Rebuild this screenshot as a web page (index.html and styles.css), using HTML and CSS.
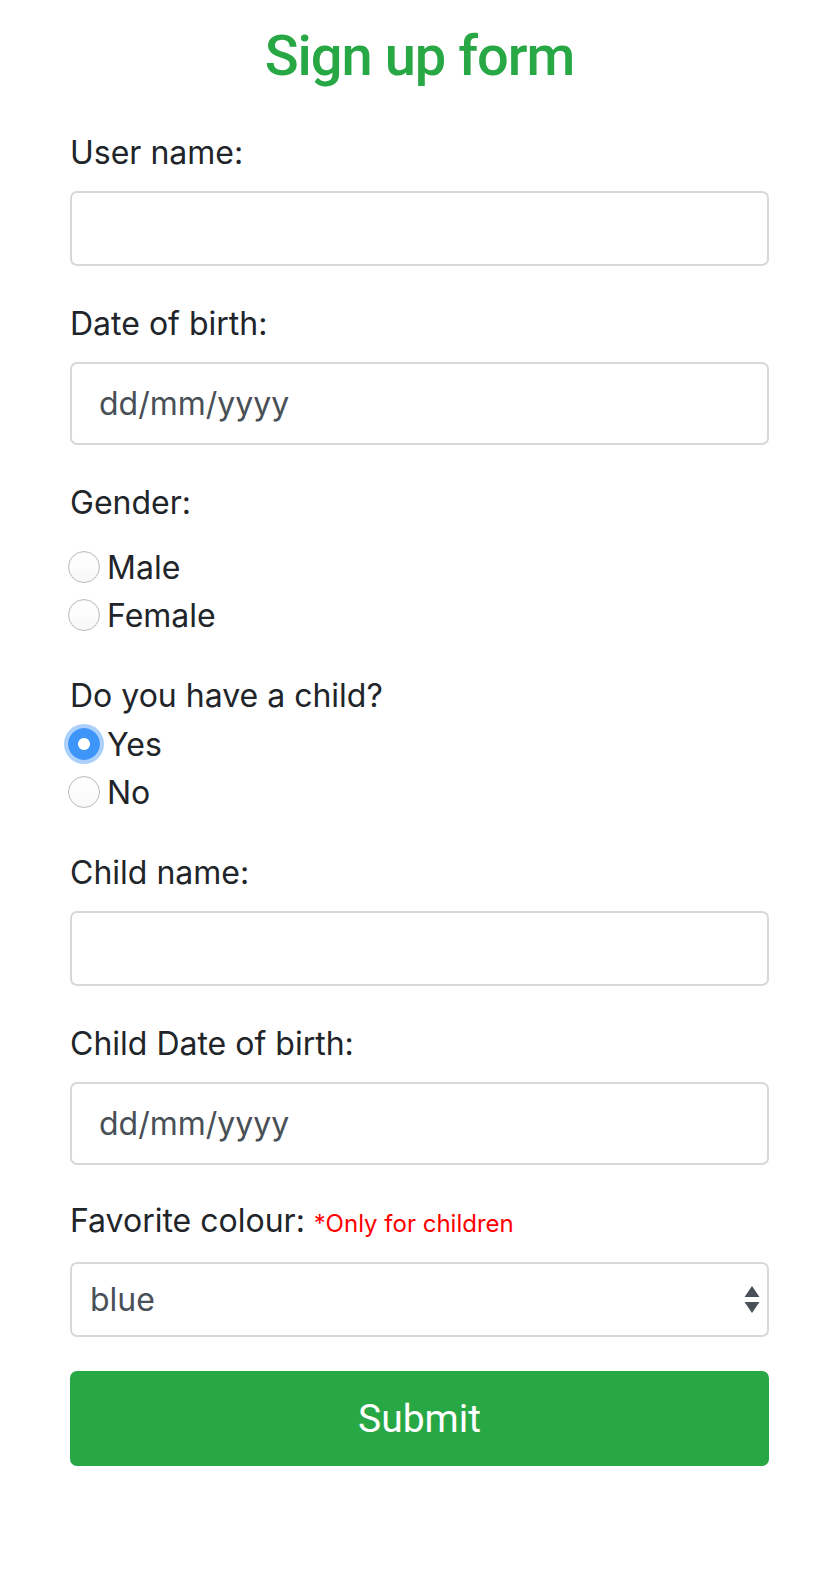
FILE: index.html
```html
<!DOCTYPE html>
<html lang="en">
<head>
<meta charset="utf-8">
<title>Sign up form</title>
<link rel="stylesheet" href="styles.css">
</head>
<body>
<div class="page">
  <h1 class="title">Sign up form</h1>
  <form class="form">
    <div class="group">
      <label class="label">User name:</label>
      <div class="field"></div>
    </div>
    <div class="group">
      <label class="label">Date of birth:</label>
      <div class="field field-date"><span>dd/mm/yyyy</span></div>
    </div>
    <div class="group group-radio">
      <label class="label label-gap">Gender:</label>
      <div class="radio-row"><span class="radio"></span><span>Male</span></div>
      <div class="radio-row"><span class="radio"></span><span>Female</span></div>
    </div>
    <div class="group group-radio">
      <label class="label label-tight">Do you have a child?</label>
      <div class="radio-row"><span class="radio radio-on"></span><span>Yes</span></div>
      <div class="radio-row"><span class="radio"></span><span>No</span></div>
    </div>
    <div class="group">
      <label class="label">Child name:</label>
      <div class="field"></div>
    </div>
    <div class="group group-short">
      <label class="label">Child Date of birth:</label>
      <div class="field field-date"><span>dd/mm/yyyy</span></div>
    </div>
    <div class="group">
      <label class="label">Favorite colour: <span class="note">*Only for children</span></label>
      <div class="field field-select">
        <span>blue</span>
        <svg class="arrows" width="16" height="28" viewBox="0 0 16 28"><path d="M8 0 L15.5 11 L0.5 11 Z" fill="#495057"/><path d="M0.5 16 L15.5 16 L8 27 Z" fill="#495057"/></svg>
      </div>
    </div>
    <div class="submit">Submit</div>
  </form>
</div>
</body>
</html>
```
FILE: styles.css
```css
html, body {
  margin: 0;
  padding: 0;
  background: #ffffff;
}

body {
  font-family: "Inter", "Noto Sans", sans-serif;
  font-size: 32px;
  color: #212529;
}

.page {
  padding: 23px 67px 40px 70px;
}

.title {
  margin: 0 0 39px;
  font-family: "Roboto", "Liberation Sans", sans-serif;
  font-weight: 500;
  font-size: 56px;
  line-height: 67px;
  letter-spacing: -1px;
  color: #28a745;
  text-align: center;
}

.form {
  display: flex;
  flex-direction: column;
}

.group {
  margin-bottom: 34px;
}

.group-radio {
  margin-bottom: 33px;
}

.group-short {
  margin-bottom: 32px;
}

.label {
  display: block;
  line-height: 48px;
  margin-bottom: 14px;
}

.label-gap {
  margin-bottom: 16px;
}

.label-tight {
  margin-bottom: 0;
}

.note {
  font-size: 24px;
  color: #ff0000;
  margin-left: 0;
}

.field {
  box-sizing: border-box;
  height: 75px;
  border: 2px solid #d8d8d8;
  border-radius: 7px;
  background: #ffffff;
  display: flex;
  align-items: center;
  color: #495057;
}

.field-date {
  height: 83px;
  padding-left: 27px;
}

.field-select {
  height: 75px;
  padding-left: 18px;
  padding-right: 7px;
  justify-content: space-between;
}

.arrows {
  display: block;
}

.radio-row {
  display: flex;
  align-items: center;
  height: 48px;
  gap: 7px;
  margin-left: -2px;
}

.radio {
  box-sizing: border-box;
  width: 32px;
  height: 32px;
  border-radius: 50%;
  border: 1px solid #bdbdbd;
  background: linear-gradient(#ffffff, #f8f8f8);
  box-shadow: inset 0 1px 1px rgba(0, 0, 0, 0.05);
  flex: none;
}

.radio-on {
  border: none;
  background: radial-gradient(circle, #ffffff 0 5.5px, #3d96f7 6.5px);
  box-shadow: 0 0 0 4px rgba(90, 160, 250, 0.5);
}

.submit {
  box-sizing: border-box;
  height: 95px;
  border-radius: 7px;
  background: #28a745;
  color: #ffffff;
  font-family: "Roboto", "Liberation Sans", sans-serif;
  font-size: 39px;
  display: flex;
  align-items: center;
  justify-content: center;
}
```
